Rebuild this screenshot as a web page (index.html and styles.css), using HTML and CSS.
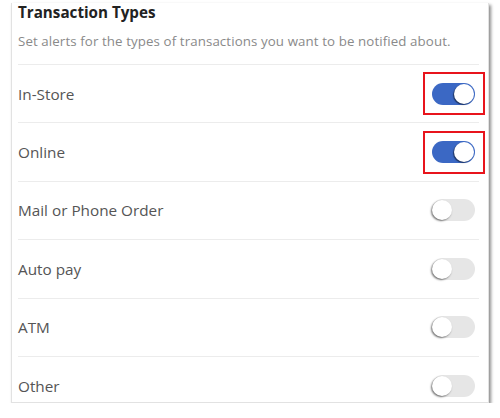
FILE: index.html
```html
<!DOCTYPE html>
<html lang="en">
<head>
    <meta charset="utf-8">
    <title>Transaction Types</title>
    <link rel="stylesheet" href="styles.css">
</head>
<body>
    <div class="card">
        <div class="title">Transaction Types</div>
        <div class="subtitle">Set alerts for the types of transactions you want to be notified about.</div>
        <ul class="list">
            <li>In-Store<span class="mark"><span class="toggle on"></span></span></li>
            <li>Online<span class="mark"><span class="toggle on"></span></span></li>
            <li>Mail or Phone Order<span class="toggle"></span></li>
            <li>Auto pay<span class="toggle"></span></li>
            <li>ATM<span class="toggle"></span></li>
            <li>Other<span class="toggle"></span></li>
        </ul>
    </div>
</body>
</html>
```

FILE: styles.css
```css
html,
body {
    margin: 0;
    background: #ffffff;
    font-family: "Open Sans", "Noto Sans", sans-serif;
}

.card {
    margin: 3px 0 0 11px;
    width: 478px;
    height: 400px;
    box-sizing: border-box;
    padding: 0 9px 0 6px;
    background: #ffffff;
    border: 1px solid #e2e2e2;
    border-top: none;
    box-shadow: 2px 2px 3px rgba(0, 0, 0, 0.45);
}

.title {
    font-size: 15.2px;
    font-weight: 700;
    color: #222222;
    line-height: 18px;
}

.subtitle {
    margin-top: 12px;
    font-size: 13.3px;
    letter-spacing: 0.1px;
    color: #8a8a8a;
    line-height: 16px;
    padding-bottom: 15px;
    border-bottom: 1px solid #ececec;
}

.list {
    list-style: none;
    margin: 0;
    padding: 0;
}

.list li {
    display: flex;
    align-items: center;
    justify-content: space-between;
    height: 57.4px;
    border-bottom: 1px solid #ececec;
    font-size: 15.3px;
    color: #555555;
}

.list li:last-child {
    border-bottom: none;
}

.toggle {
    position: relative;
    flex: none;
    width: 43px;
    height: 22px;
    margin-right: 4px;
    border-radius: 11px;
    background: #e6e6e6;
}

.toggle::after {
    content: '';
    position: absolute;
    top: 1px;
    left: 0;
    width: 20px;
    height: 20px;
    border-radius: 50%;
    background: #ffffff;
    box-shadow: -1px 1px 2px rgba(0, 0, 0, 0.55);
}

.toggle.on {
    background: #3b68c4;
}

.toggle.on::after {
    left: auto;
    right: 1px;
    box-shadow: -1px 1px 1px rgba(0, 0, 0, 0.5);
}

.mark {
    display: flex;
    flex: none;
    align-items: center;
    justify-content: center;
    width: 58px;
    height: 39px;
    margin-right: -6px;
    border: 2px solid #e8141c;
}

.mark .toggle {
    margin: 0 1px 0 0;
}
```
